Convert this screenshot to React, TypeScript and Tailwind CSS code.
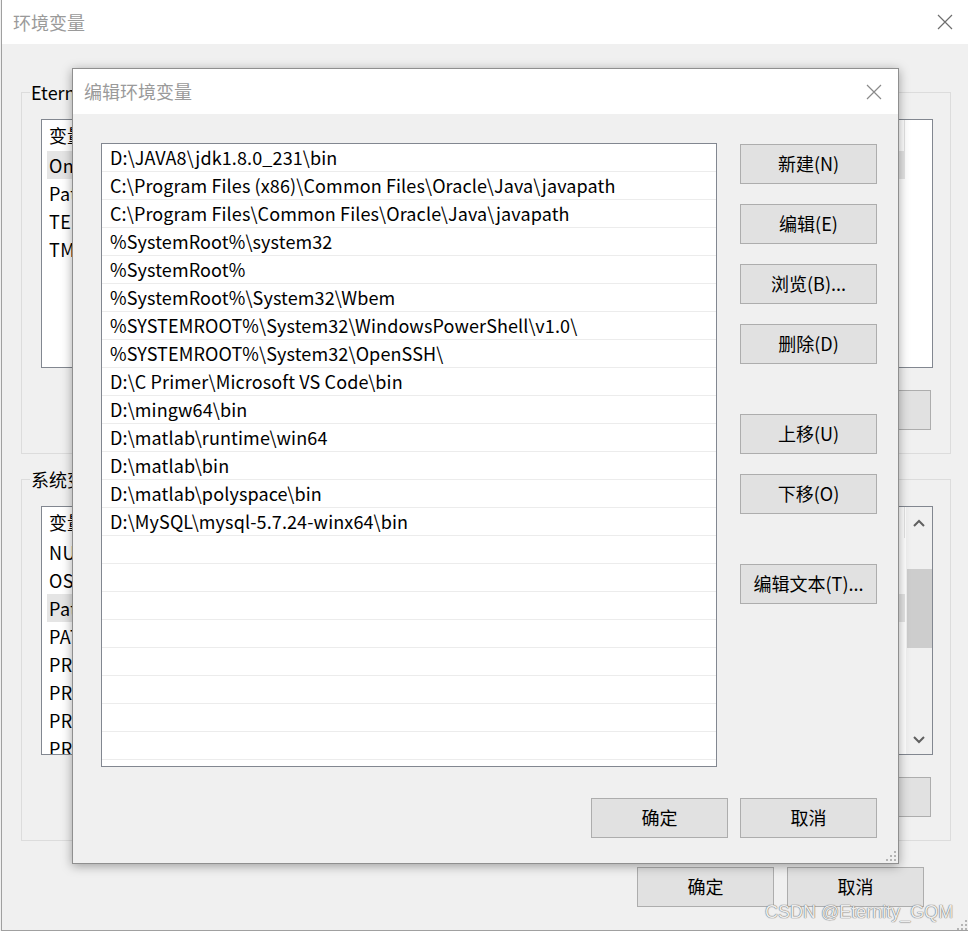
import React from 'react';

const entries: string[] = [
  'D:\\JAVA8\\jdk1.8.0_231\\bin',
  'C:\\Program Files (x86)\\Common Files\\Oracle\\Java\\javapath',
  'C:\\Program Files\\Common Files\\Oracle\\Java\\javapath',
  '%SystemRoot%\\system32',
  '%SystemRoot%',
  '%SystemRoot%\\System32\\Wbem',
  '%SYSTEMROOT%\\System32\\WindowsPowerShell\\v1.0\\',
  '%SYSTEMROOT%\\System32\\OpenSSH\\',
  'D:\\C Primer\\Microsoft VS Code\\bin',
  'D:\\mingw64\\bin',
  'D:\\matlab\\runtime\\win64',
  'D:\\matlab\\bin',
  'D:\\matlab\\polyspace\\bin',
  'D:\\MySQL\\mysql-5.7.24-winx64\\bin',
];

const userVars = ['OneDrive', 'Path', 'TEMP', 'TMP'];
const sysVars = [
  'NUMBER_OF_PROCESSORS',
  'OS',
  'Path',
  'PATHEXT',
  'PROCESSOR_ARCHITECTURE',
  'PROCESSOR_IDENTIFIER',
  'PROCESSOR_LEVEL',
  'PROCESSOR_REVISION',
];

const WinButton: React.FC<{ label: string; className?: string }> = ({ label, className = '' }) => (
  <div
    className={`flex h-[40px] w-[137px] shrink-0 items-center justify-center border border-[#adadad] bg-[#e1e1e1] pb-[1px] text-[18px] text-black ${className}`}
  >
    {label}
  </div>
);

const CloseIcon: React.FC<{ color: string }> = ({ color }) => (
  <svg width="16" height="16" viewBox="0 0 16 16">
    <path d="M1 1 L15 15 M15 1 L1 15" stroke={color} strokeWidth="1.2" fill="none" />
  </svg>
);

const Grip = () => (
  <svg width="12" height="12" viewBox="0 0 12 12">
    <g fill="#b4b4b4">
      <rect x="9" y="1" width="2" height="2" />
      <rect x="5" y="5" width="2" height="2" />
      <rect x="9" y="5" width="2" height="2" />
      <rect x="1" y="9" width="2" height="2" />
      <rect x="5" y="9" width="2" height="2" />
      <rect x="9" y="9" width="2" height="2" />
    </g>
  </svg>
);

// background list of variables (only the left/right edges peek out)
const VarList: React.FC<{ rows: string[]; selected: number; scroll?: boolean }> = ({ rows, selected, scroll }) => (
  <div className="flex h-[249px] overflow-hidden border border-[#828790] bg-white">
    <div className="flex flex-1 flex-col pl-[5px] pr-[1px]">
      <div className="flex h-[31px] shrink-0 items-center border-r border-[#e3e3e3] pl-[2px]">变量</div>
      {rows.map((r, i) => (
        <div
          key={r + i}
          className={`flex h-[28px] shrink-0 items-center pl-[2px] tracking-[0.4px] ${i === selected ? 'bg-[#e5e5e5]' : ''}`}
        >
          {r}
        </div>
      ))}
    </div>
    {scroll ? (
      <div className="flex w-[26px] shrink-0 flex-col items-center bg-[#f0f0f0] py-[1px]">
        <svg width="12" height="8" viewBox="0 0 12 8" className="mt-[11px]">
          <path d="M1 7 L6 2 L11 7" stroke="#606060" strokeWidth="2" fill="none" />
        </svg>
        <div className="mt-[42px] h-[79px] w-[25px] bg-[#cdcdcd]" />
        <div className="flex-1" />
        <svg width="12" height="8" viewBox="0 0 12 8" className="mb-[9px]">
          <path d="M1 1 L6 6 L11 1" stroke="#606060" strokeWidth="2" fill="none" />
        </svg>
      </div>
    ) : (
      <div className="w-[26px] shrink-0" />
    )}
  </div>
);

const BackgroundWindow = () => (
  <div className="ml-px flex h-[931px] w-[967px] flex-col border-b border-l border-[#a0a0a0] bg-[#f0f0f0]">
    <div className="flex h-[44px] shrink-0 items-center justify-between bg-white pl-[11px] pr-[15px] text-[#9a9a9a]">
      <span>环境变量</span>
      <CloseIcon color="#6e6e6e" />
    </div>
    <div className="flex flex-col pl-[19px] pr-[17px]">
      <fieldset className="mt-[36px] border border-[#dcdcdc] p-0">
        <legend className="ml-[8px] px-px leading-[24px]">Eternity 的用户变量(U)</legend>
        <div className="flex flex-col pb-[23px] pl-[19px] pr-[17px] pt-[15px]">
          <VarList rows={userVars} selected={0} />
          <div className="mr-[2px] mt-[22px] flex justify-end gap-[13px]">
            <WinButton label="新建(N)..." />
            <WinButton label="编辑(E)..." />
            <WinButton label="删除(D)" />
          </div>
        </div>
      </fieldset>
      <fieldset className="mt-[13px] border border-[#dcdcdc] p-0">
        <legend className="ml-[8px] px-px leading-[24px]">系统变量(S)</legend>
        <div className="flex flex-col pb-[23px] pl-[19px] pr-[17px] pt-[15px]">
          <VarList rows={sysVars} selected={2} scroll />
          <div className="mr-[2px] mt-[22px] flex justify-end gap-[13px]">
            <WinButton label="新建(W)..." />
            <WinButton label="编辑(I)..." />
            <WinButton label="删除(L)" />
          </div>
        </div>
      </fieldset>
      <div className="mt-[26px] flex justify-end gap-[13px] pr-[27px]">
        <WinButton label="确定" className="w-[136px]" />
        <WinButton label="取消" className="w-[136px]" />
      </div>
    </div>
  </div>
);

const EditDialog = () => {
  const blanks = Array.from({ length: 9 }, () => '');
  return (
    <div className="absolute left-[72px] top-[68px] flex h-[796px] w-[827px] flex-col border border-[#8f8f8f] bg-[#f0f0f0] shadow-[0_2px_10px_rgba(0,0,0,0.35)]">
      <div className="flex h-[45px] shrink-0 items-center justify-between bg-white pl-[11px] pr-[16px] text-[#9a9a9a]">
        <span>编辑环境变量</span>
        <CloseIcon color="#8a8a8a" />
      </div>
      <div className="flex flex-col pl-[28px] pt-[29px]">
        <div className="flex gap-[23px]">
          <div className="flex h-[624px] w-[616px] flex-col overflow-hidden border border-[#828790] bg-white">
            {[...entries, ...blanks].map((e, i) => (
              <div
                key={i}
                className="flex h-[28px] shrink-0 items-center border-b border-[#ececec] pb-[1px] pl-[8px] tracking-[0.12px]"
              >
                {e}
              </div>
            ))}
          </div>
          <div className="flex flex-col pt-[1px]">
            <WinButton label="新建(N)" />
            <WinButton label="编辑(E)" className="mt-[20px]" />
            <WinButton label="浏览(B)..." className="mt-[20px]" />
            <WinButton label="删除(D)" className="mt-[20px]" />
            <WinButton label="上移(U)" className="mt-[50px]" />
            <WinButton label="下移(O)" className="mt-[20px]" />
            <WinButton label="编辑文本(T)..." className="mt-[50px]" />
          </div>
        </div>
        <div className="mt-[31px] flex justify-end gap-[12px] pr-[21px]">
          <WinButton label="确定" />
          <WinButton label="取消" />
        </div>
      </div>
      <div className="absolute bottom-[1px] right-[1px]">
        <Grip />
      </div>
    </div>
  );
};

export default function App() {
  return (
    <div className="relative h-[931px] w-[968px] overflow-hidden bg-[#f0f0f0] font-['Noto_Sans_CJK_SC','Microsoft_YaHei',sans-serif] text-[18px] text-black">
      <BackgroundWindow />
      <EditDialog />
      <div className="absolute bottom-0 right-0">
        <Grip />
      </div>
      <div className="absolute left-[765px] top-[899px] font-['Liberation_Sans',Arial,sans-serif] text-[18px] leading-[26px] text-[#ececec] [text-shadow:0_0_1px_#6a6a6a,0_0_1px_#6a6a6a]">
        CSDN @Eternity_GQM
      </div>
    </div>
  );
}
